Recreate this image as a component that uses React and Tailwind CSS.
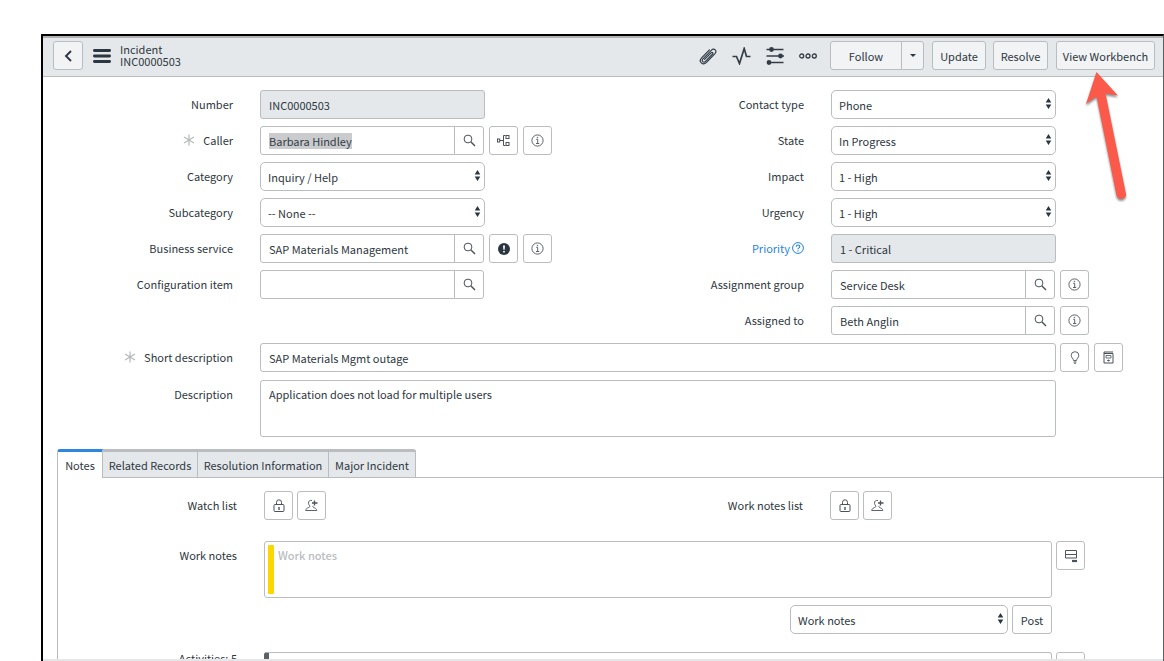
import React, { useEffect, useRef } from "react";

const iconButton =
  "flex h-[29px] w-[29px] shrink-0 items-center justify-center rounded-[3px] border border-[#b9bdc0] bg-white text-[#4a525b]";
const headerButton =
  "h-[29px] rounded-[3px] border border-[#b9bdc0] bg-[#f1f3f5] text-center";
const textField =
  "h-[29px] w-full min-w-0 rounded-[3px] border border-[#b9bdc0] px-2 outline-none";

function SearchIcon() {
  return (
    <svg width="13" height="13" viewBox="0 0 13 13" fill="none" stroke="#4a525b" aria-hidden="true">
      <circle cx="5" cy="5" r="3.9" />
      <path d="M8 8l4 4" strokeWidth="1.4" />
    </svg>
  );
}

function InfoIcon() {
  return (
    <svg width="13" height="13" viewBox="0 0 13 13" fill="none" stroke="currentColor" aria-hidden="true">
      <circle cx="6.5" cy="6.5" r="5.6" strokeWidth="0.9" />
      <path d="M5.2 5.3h1.5v4.2M5 9.5h3.2" strokeWidth="0.9" />
      <circle cx="6.4" cy="3.4" r="0.4" fill="currentColor" strokeWidth="0.6" />
    </svg>
  );
}

function TreeIcon() {
  return (
    <svg width="13" height="13" viewBox="0 0 13 13" fill="none" stroke="currentColor" aria-hidden="true">
      <rect x="0.5" y="5" width="2.2" height="3" />
      <path d="M3 6.5h3.5M8.5 1.5h-2v10h2" />
      <rect x="9" y="1.5" width="3" height="3" />
      <rect x="9" y="8.5" width="3" height="3" />
    </svg>
  );
}

function AlertIcon() {
  return (
    <svg width="12" height="12" viewBox="0 0 12 12" aria-hidden="true">
      <circle cx="6" cy="6" r="6" fill="#2b3640" />
      <path d="M5 2.5h2l-.4 4.2H5.4z" fill="#fff" />
      <circle cx="6" cy="8.7" r="0.9" fill="#fff" />
    </svg>
  );
}

function BulbIcon() {
  return (
    <svg width="10" height="13" viewBox="0 0 10 13" fill="none" stroke="currentColor" aria-hidden="true">
      <path d="M3.5 9.5c0-2-2.3-2.7-2.3-5.2a3.8 3.6 0 0 1 7.6 0c0 2.5-2.3 3.2-2.3 5.2z" strokeWidth="0.9" />
      <path d="M3.5 11h3M4.2 12.4h1.6" />
    </svg>
  );
}

function BookIcon() {
  return (
    <svg width="11" height="13" viewBox="0 0 11 13" fill="none" stroke="currentColor" aria-hidden="true">
      <path d="M1 2.500h9v9.500H1zM1 2.500V1h9" />
      <path d="M3 4.500h5v2.500H3zM4 9.500h3M5.500 8.500v2" strokeWidth="0.8" />
    </svg>
  );
}

function LockIcon() {
  return (
    <svg width="12" height="13" viewBox="0 0 12 13" fill="none" stroke="currentColor" aria-hidden="true">
      <rect x="1" y="5.5" width="10" height="7" rx="1" />
      <path d="M3.5 5.5V3.3a2.500 2.500 0 0 1 5 0v2.200" />
      <path d="M6 8v3" strokeWidth="1.4" />
    </svg>
  );
}

function AddMeIcon() {
  return (
    <svg width="13" height="13" viewBox="0 0 13 13" fill="none" stroke="currentColor" aria-hidden="true">
      <path d="M7 1.500C4.800.9 3.300 2.300 3.500 4.200c.1 1.200.7 2 1.200 2.600.4 1-.2 1.400-1.500 1.900C1.600 9.400.9 10 .7 11.500h11.100c-.2-1.500-.9-2.100-2.500-2.700-1.300-.5-1.800-.9-1.200-2" strokeWidth="0.9" />
      <path d="M9.500 1.500v5M7 4h5.500" strokeWidth="1.3" />
    </svg>
  );
}

function StackIcon() {
  return (
    <svg width="14" height="14" viewBox="0 0 14 14" fill="none" stroke="currentColor" aria-hidden="true">
      <path d="M1.500 1.500h11v4h-11zM1.500 5.500h11v3.500h-11z" />
      <path d="M8 12h5" strokeWidth="2.200" />
    </svg>
  );
}

function Required() {
  return (
    <svg className="mr-2 shrink-0" width="12" height="12" viewBox="0 0 12 12" fill="none" stroke="#b4b8bb" strokeWidth="1.2" aria-hidden="true">
      <path d="M6 0.500v11M1 3l10 6M11 3L1 9" />
    </svg>
  );
}

function Select({ id, label, options }) {
  return (
    <div className="relative w-full">
      <select id={id} aria-label={label} className="block h-[29px] w-full appearance-none rounded-[5px] border border-[#b9bdc0] bg-white px-[7px] outline-none">
        {options.map((option) => (
          <option key={option}>{option}</option>
        ))}
      </select>
      <svg className="pointer-events-none absolute top-2 right-1" width="7" height="11" viewBox="0 0 7 11" fill="#2b3640" aria-hidden="true">
        <path d="M3.500 0l2.800 4.500H.7zM3.500 11L.7 6.500h5.600z" />
      </svg>
    </div>
  );
}

function Lookup({ id, value, inputRef }) {
  return (
    <div className="flex w-full pr-px">
      <input
        id={id}
        ref={inputRef}
        type="text"
        defaultValue={value}
        className="h-[29px] w-full min-w-0 rounded-l-[3px] border border-[#b9bdc0] px-2 outline-none selection:bg-[#c9cbcc] selection:text-[#343d47]"
      />
      <button type="button" aria-label="Look up using list" className="-ml-px flex h-[29px] w-[30px] shrink-0 items-center justify-center rounded-r-[3px] border border-[#b9bdc0] bg-white">
        <SearchIcon />
      </button>
    </div>
  );
}

function Field({ id, label, required, help, side, children }) {
  return (
    <div className="flex">
      <label
        htmlFor={id}
        className={`mr-[27px] flex h-7 w-[190px] shrink-0 items-center justify-end ${help ? "text-[#1f83dd]" : ""}`}
      >
        {required && <Required />}
        {label}
        {help && (
          <svg className="ml-0.5" width="12" height="12" viewBox="0 0 12 12" fill="none" stroke="currentColor" aria-hidden="true">
            <circle cx="6" cy="6" r="5.4" />
            <path d="M4.300 4.700c0-2.200 3.500-2.200 3.500 0 0 1.200-1.800 1.200-1.800 2.500M6 8.300v1.100" strokeWidth="1.1" />
          </svg>
        )}
      </label>
      <div className="min-w-0 flex-1">{children}</div>
      <div className="flex w-[107px] shrink-0 gap-[5px] pl-1">{side}</div>
    </div>
  );
}

function SideButton({ label, children }) {
  return (
    <button type="button" aria-label={label} className={iconButton}>
      {children}
    </button>
  );
}

function Header() {
  return (
    <header className="flex h-[41px] shrink-0 items-start border-t-2 border-b border-t-[#b3b1b5] border-b-[#b9bdc0] bg-[#e4e8eb] pt-[3px] pr-2 pl-[10px]">
      <button type="button" aria-label="Back" className={`${headerButton} flex w-[30px] items-center justify-center`}>
        <svg width="8" height="12" viewBox="0 0 8 12" fill="none" stroke="#2b3640" strokeWidth="1.9" aria-hidden="true">
          <path d="M7 1L2 6l5 5" />
        </svg>
      </button>
      <button type="button" aria-label="Additional actions" className="flex h-[29px] w-[37px] items-center justify-center">
        <svg width="18" height="14" viewBox="0 0 18 14" stroke="#2b3640" strokeWidth="2.8" strokeLinecap="round" aria-hidden="true">
          <path d="M1.400 1.500h15.200M1.400 7h15.200M1.400 12.500h15.200" />
        </svg>
      </button>
      <h1 className="flex flex-col pt-[2px] leading-3">
        <span>Incident</span>
        <span>INC0000503</span>
      </h1>
      <div className="ml-auto flex h-[29px] items-center gap-[15px] pr-[13px]">
        <button type="button" aria-label="Attachments">
          <svg width="18" height="18" viewBox="0 0 18 18" fill="none" stroke="#343d47" strokeWidth="1.2" strokeLinecap="round" aria-hidden="true">
            <path d="M5.600 12.400l6.700-6.700c1-1 2.300.3 1.300 1.300l-7.100 7.300c-2 2-4.500-.4-2.500-2.500l8.300-8.500c2.900-2.900 6.300.5 3.500 3.500l-8.300 8.600c-3.800 3.700-8.400-.8-4.900-4.500l7.800-8" />
          </svg>
        </button>
        <button type="button" aria-label="Activity">
          <svg width="19" height="18" viewBox="0 0 19 18" fill="none" stroke="#343d47" strokeWidth="1.7" aria-hidden="true">
            <path d="M0.500 9.500h4l3 7L12.200 1.500l2.300 8h4" />
          </svg>
        </button>
        <button type="button" aria-label="Personalize form">
          <svg width="18" height="18" viewBox="0 0 18 18" fill="#343d47" stroke="#343d47" strokeWidth="1.6" aria-hidden="true">
            <path d="M0.500 2.500h17M0.500 9h17.500M1 15.500h16.500" />
            <circle cx="5.500" cy="2.500" r="1.600" />
            <circle cx="14.500" cy="9" r="1.600" />
            <circle cx="3" cy="15.500" r="1.600" />
          </svg>
        </button>
        <button type="button" aria-label="More options">
          <svg width="18" height="6" viewBox="0 0 18 6" fill="none" stroke="#343d47" strokeWidth="1.3" aria-hidden="true">
            <circle cx="2.700" cy="3" r="2" />
            <circle cx="9" cy="3" r="2" />
            <circle cx="15.300" cy="3" r="2" />
          </svg>
        </button>
      </div>
      <div className="flex">
        <button type="button" className={`${headerButton} w-[72px] rounded-r-none`}>Follow</button>
        <button type="button" aria-label="Follow options" className={`${headerButton} -ml-px flex w-[23px] items-center justify-center rounded-l-none`}>
          <svg width="6" height="3" viewBox="0 0 6 3" fill="#2b3640" aria-hidden="true">
            <path d="M0 0h6L3 3z" />
          </svg>
        </button>
      </div>
      <button type="button" className={`${headerButton} ml-2 w-[54px]`}>Update</button>
      <button type="button" className={`${headerButton} ml-[7px] w-[55px]`}>Resolve</button>
      <button type="button" className={`${headerButton} ml-2 w-[99px]`}>View Workbench</button>
    </header>
  );
}

function IncidentForm() {
  const callerRef = useRef(null);

  useEffect(() => {
    callerRef.current.focus();
    callerRef.current.select();
  }, []);

  const info = (
    <SideButton label="Preview record">
      <InfoIcon />
    </SideButton>
  );

  return (
    <form className="pt-[13px]">
      <div className="grid grid-cols-2 gap-x-[22px]">
        <div className="flex flex-col gap-[7px]">
          <Field id="number" label="Number">
            <input id="number" readOnly defaultValue="INC0000503" className={`${textField} bg-[#e4e8eb]`} />
          </Field>
          <Field
            id="caller"
            label="Caller"
            required
            side={
              <>
                <SideButton label="Show related incidents">
                  <TreeIcon />
                </SideButton>
                {info}
              </>
            }
          >
            <Lookup id="caller" value="Barbara Hindley" inputRef={callerRef} />
          </Field>
          <Field id="category" label="Category">
            <Select id="category" options={["Inquiry / Help", "Software", "Hardware", "Network"]} />
          </Field>
          <Field id="subcategory" label="Subcategory">
            <Select id="subcategory" options={["-- None --", "Email", "Internal Application"]} />
          </Field>
          <Field
            id="service"
            label="Business service"
            side={
              <>
                <SideButton label="Active outage">
                  <AlertIcon />
                </SideButton>
                {info}
              </>
            }
          >
            <Lookup id="service" value="SAP Materials Management" />
          </Field>
          <Field id="ci" label="Configuration item">
            <Lookup id="ci" value="" />
          </Field>
        </div>
        <div className="flex flex-col gap-[7px]">
          <Field id="contact" label="Contact type">
            <Select id="contact" options={["Phone", "Email", "Self-service"]} />
          </Field>
          <Field id="state" label="State">
            <Select id="state" options={["In Progress", "New", "On Hold", "Resolved"]} />
          </Field>
          <Field id="impact" label="Impact">
            <Select id="impact" options={["1 - High", "2 - Medium", "3 - Low"]} />
          </Field>
          <Field id="urgency" label="Urgency">
            <Select id="urgency" options={["1 - High", "2 - Medium", "3 - Low"]} />
          </Field>
          <Field id="priority" label="Priority" help>
            <input id="priority" readOnly defaultValue="1 - Critical" className={`${textField} bg-[#e4e8eb]`} />
          </Field>
          <Field id="group" label="Assignment group" side={info}>
            <Lookup id="group" value="Service Desk" />
          </Field>
          <Field id="assigned" label="Assigned to" side={info}>
            <Lookup id="assigned" value="Beth Anglin" />
          </Field>
        </div>
      </div>
      <div className="mt-2 flex flex-col gap-2">
        <Field
          id="short"
          label="Short description"
          required
          side={
            <>
              <SideButton label="Suggestions">
                <BulbIcon />
              </SideButton>
              <SideButton label="Search knowledge">
                <BookIcon />
              </SideButton>
            </>
          }
        >
          <input id="short" defaultValue="SAP Materials Mgmt outage" className={textField} />
        </Field>
        <Field id="description" label="Description">
          <textarea
            id="description"
            defaultValue="Application does not load for multiple users"
            className="block h-[57px] w-full resize-none rounded-[3px] border border-[#b9bdc0] px-2 py-[5px] outline-none"
          />
        </Field>
      </div>
    </form>
  );
}

function WatchList({ label }) {
  return (
    <div className="flex">
      <span className="mr-[27px] flex h-7 w-[179px] items-center justify-end">{label}</span>
      <div className="flex gap-1">
        <SideButton label={`Unlock ${label}`}>
          <LockIcon />
        </SideButton>
        <SideButton label={`Add me to ${label}`}>
          <AddMeIcon />
        </SideButton>
      </div>
    </div>
  );
}

const tab =
  "h-[29px] border-t-[3px] border-r border-b border-[#b9bdc0] bg-[#e4e8eb] text-center whitespace-nowrap";

function NotesSection() {
  return (
    <section className="mt-3 ml-[14px] flex min-h-0 flex-1 flex-col">
      <div role="tablist" className="flex">
        <button type="button" role="tab" aria-selected="true" className="h-[29px] w-[46px] rounded-tl-[3px] border-t-[3px] border-r border-l border-t-[#2f86e0] border-r-[#b9bdc0] border-l-[#b9bdc0] bg-white text-center">
          Notes
        </button>
        <button type="button" role="tab" aria-selected="false" className={`${tab} w-[95px]`}>Related Records</button>
        <button type="button" role="tab" aria-selected="false" className={`${tab} w-[131px]`}>Resolution Information</button>
        <button type="button" role="tab" aria-selected="false" className={`${tab} w-[87px] rounded-tr-[3px]`}>Major Incident</button>
        <div className="flex-1 border-b border-[#b9bdc0]" />
      </div>
      <div className="min-h-0 flex-1 overflow-hidden border-l border-[#b9bdc0] pt-[13px]">
        <div className="grid grid-cols-2 gap-x-[27px]">
          <WatchList label="Watch list" />
          <WatchList label="Work notes list" />
        </div>
        <div className="mt-[21px] flex">
          <label htmlFor="work-notes" className="mr-[27px] flex h-7 w-[179px] shrink-0 items-center justify-end">
            Work notes
          </label>
          <div className="flex h-[57px] min-w-0 flex-1 rounded-[3px] border border-[#b9bdc0] p-[3px]">
            <div className="w-1.5 shrink-0 rounded-[1px] bg-[#fbd600]" />
            <textarea
              id="work-notes"
              placeholder="Work notes"
              className="w-full resize-none px-1 pt-0.5 outline-none placeholder:font-medium placeholder:text-[#b9bdc0]"
            />
          </div>
          <div className="w-[111px] shrink-0 pl-1">
            <SideButton label="Show all journal fields">
              <StackIcon />
            </SideButton>
          </div>
        </div>
        <div className="mt-[7px] mr-[111px] flex justify-end gap-1">
          <div className="w-[218px]">
            <Select id="journal" label="Journal field" options={["Work notes", "Additional comments"]} />
          </div>
          <button type="button" className="h-[29px] w-10 rounded-[3px] border border-[#b9bdc0] bg-white">
            Post
          </button>
        </div>
        <div className="mt-[18px] flex">
          <span className="mr-[27px] w-[179px] shrink-0 text-right leading-3">Activities: 5</span>
          <div className="h-10 min-w-0 flex-1 rounded-[3px] border border-l-[5px] border-[#b9bdc0] border-l-[#5c6168]" />
          <div className="w-[111px] shrink-0 pl-1">
            <SideButton label="Filter activity" />
          </div>
        </div>
      </div>
    </section>
  );
}

export default function App() {
  return (
    <div className="relative flex h-screen flex-col overflow-hidden bg-white pt-[34px] pl-[41px] font-['Noto_Sans_CJK_SC',sans-serif] text-[11px] leading-4 text-[#2e3740]">
      <main className="flex min-h-0 flex-1 flex-col border-t-2 border-r border-l-2 border-t-black border-r-[#5c5f62] border-l-black">
        <Header />
        <IncidentForm />
        <NotesSection />
        <div className="h-0.5 shrink-0 bg-[#e4e6e8]" />
      </main>
      <svg className="pointer-events-none absolute top-[68px] right-8 drop-shadow-[0_2px_1px_rgba(0,0,0,0.45)]" width="52" height="136" viewBox="0 0 52 136" aria-hidden="true">
        <path d="M16.500 4L38 27.500l-12.500-2L46 126c.6 5.500-8 7-9.500 1.500L16.500 28.500 6 36z" fill="#fb5a4b" />
      </svg>
    </div>
  );
}
